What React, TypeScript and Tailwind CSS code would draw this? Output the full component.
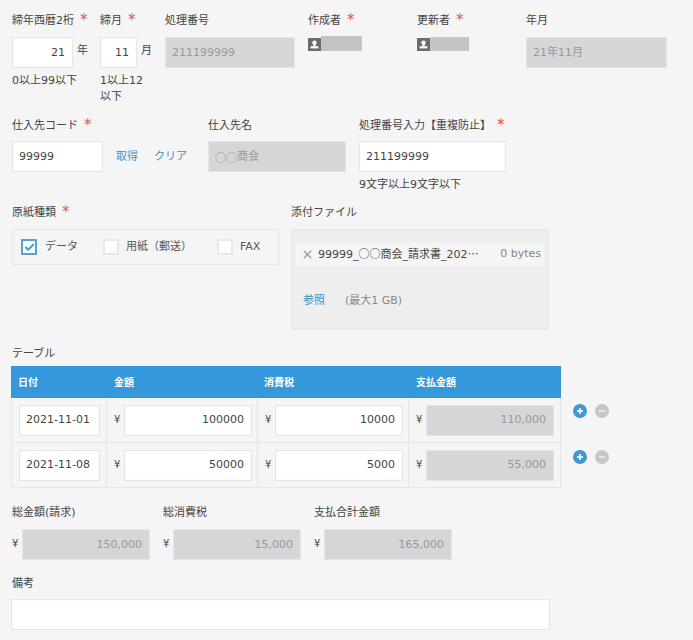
import type { ReactNode } from 'react'
import { Check, X } from 'lucide-react'
import clsx from 'clsx'

function Required() {
  return <span className="-mt-[2px] ml-[6px] text-[15px] leading-[14px] text-[#e2574c]">*</span>
}

function Label({ text, required }: { text: string; required?: boolean }) {
  return (
    <div className="flex h-[20px] items-center whitespace-nowrap pt-[2px] text-[#444]">
      {text}
      {required && <Required />}
    </div>
  )
}

function Input({ value, width, disabled, right }: { value?: ReactNode; width: string; disabled?: boolean; right?: boolean }) {
  return (
    <div
      className={clsx(
        'flex h-[31px] shrink-0 items-center border border-[#e3e7e8] pt-[1px]',
        width,
        disabled ? 'bg-[#d4d6d7] text-[#999]' : 'bg-white text-[#444] shadow-[inset_0_0_2px_#eee]',
        right ? 'justify-end pr-[7px]' : 'justify-start pl-[6px]',
      )}
    >
      {value}
    </div>
  )
}

function Money({ value, width, disabled }: { value: string; width: string; disabled?: boolean }) {
  return (
    <div className="flex items-center">
      <span className="-mt-[2px] w-[10px] text-[10px] text-[#444]">¥</span>
      <Input value={value} width={width} disabled={disabled} right />
    </div>
  )
}

function User({ barWidth, barClass }: { barWidth: string; barClass: string }) {
  return (
    <div className="flex items-end">
      <div className="flex h-[13px] w-[13px] items-center justify-center bg-[#6b6b6b]">
        <svg viewBox="0 0 13 13" className="h-[13px] w-[13px]">
          <circle cx="6.5" cy="4.8" r="2.2" fill="#fff" />
          <rect x="5.4" y="5" width="2.2" height="3.4" fill="#fff" />
          <rect x="2.6" y="8.2" width="7.8" height="2.2" fill="#fff" />
        </svg>
      </div>
      <div className={clsx('bg-[#c4c4c4]', barWidth, barClass)} />
    </div>
  )
}

function Checkbox({ checked, label, width }: { checked?: boolean; label: string; width: string }) {
  return (
    <div className={clsx('flex items-center', width)}>
      <div
        className={clsx(
          'flex h-[16px] w-[16px] items-center justify-center border-2 bg-white',
          checked ? 'border-[#5aa3d0]' : 'border-[#e8e8e8]',
        )}
      >
        {checked && <Check size={11} strokeWidth={4} className="text-[#3498db]" />}
      </div>
      <span className={clsx('text-[#555]', checked ? 'ml-[8px]' : 'ml-[7px]')}>{label}</span>
    </div>
  )
}

function RoundButton({ kind }: { kind: 'plus' | 'minus' }) {
  const plus = kind === 'plus'
  return (
    <svg viewBox="0 0 14 14" className="h-[14px] w-[14px]">
      <circle cx="7" cy="7" r="7" fill={plus ? '#3f97d8' : '#c6c6c6'} />
      <rect x="4" y="6.2" width="6" height="1.6" fill={plus ? '#fff' : '#eee'} />
      {plus && <rect x="6.2" y="4" width="1.6" height="6" fill="#fff" />}
    </svg>
  )
}

function Cell({ width, children }: { width: string; children: ReactNode }) {
  return <div className={clsx('flex h-full items-center border-r border-[#e3e7e8] pl-[7px]', width)}>{children}</div>
}

function Circles() {
  return <span className="font-['Noto_Sans_CJK_JP']">○○</span>
}

const rows = [
  { date: '2021-11-01', amount: '100000', tax: '10000', total: '110,000' },
  { date: '2021-11-08', amount: '50000', tax: '5000', total: '55,000' },
]

export default function App() {
  return (
    <div
      className="h-[640px] w-[693px] overflow-hidden bg-[#f5f5f5] pl-[12px] pt-[10px] text-[11px]"
      style={{ fontFamily: '"DejaVu Sans", "Noto Sans CJK JP", sans-serif' }}
    >
      <div className="flex h-[93px]">
        <div className="w-[88px]">
          <Label text="締年西暦2桁" required />
          <div className="mt-[7px] flex items-center">
            <Input value="21" width="w-[61px]" right />
            <span className="-mt-[2px] ml-[4px] text-[#444]">年</span>
          </div>
          <div className="mt-[5px] leading-[16px] text-[#444]">0以上99以下</div>
        </div>
        <div className="w-[65px]">
          <Label text="締月" required />
          <div className="mt-[7px] flex items-center">
            <Input value="11" width="w-[37px]" right />
            <span className="-mt-[2px] ml-[4px] text-[#444]">月</span>
          </div>
          <div className="mt-[5px] w-[48px] leading-[16px] text-[#444]">1以上12以下</div>
        </div>
        <div className="w-[143px]">
          <Label text="処理番号" />
          <div className="mt-[7px]">
            <Input value="211199999" width="w-[130px]" disabled />
          </div>
        </div>
        <div className="w-[109px]">
          <Label text="作成者" required />
          <div className="mt-[6px]">
            <User barWidth="w-[41px]" barClass="h-[15px]" />
          </div>
        </div>
        <div className="w-[109px]">
          <Label text="更新者" required />
          <div className="mt-[7px]">
            <User barWidth="w-[39px]" barClass="h-[14px]" />
          </div>
        </div>
        <div>
          <Label text="年月" />
          <div className="mt-[7px]">
            <Input value="21年11月" width="w-[141px]" disabled />
          </div>
        </div>
      </div>

      <div className="mt-[12px] flex h-[76px]">
        <div className="w-[196px]">
          <Label text="仕入先コード" required />
          <div className="mt-[6px] flex">
            <Input value="99999" width="w-[91px]" />
            <span className="ml-[13px] mt-[8px] text-[#3f8fc5]">取得</span>
            <span className="ml-[16px] mt-[8px] text-[#3f8fc5]">クリア</span>
          </div>
        </div>
        <div className="w-[151px]">
          <Label text="仕入先名" />
          <div className="mt-[6px]">
            <Input value={<><Circles />商会</>} width="w-[138px]" disabled />
          </div>
        </div>
        <div>
          <Label text="処理番号入力【重複防止】" required />
          <div className="mt-[6px]">
            <Input value="211199999" width="w-[147px]" />
          </div>
          <div className="mt-[5px] leading-[16px] text-[#444]">9文字以上9文字以下</div>
        </div>
      </div>

      <div className="mt-[11px] flex h-[127px]">
        <div className="w-[279px]">
          <Label text="原紙種類" required />
          <div className="mt-[7px] flex h-[36px] w-[267px] items-center border border-[#e3e7e8] pl-[8px]">
            <Checkbox checked label="データ" width="w-[82px]" />
            <Checkbox label="用紙（郵送）" width="w-[114px]" />
            <Checkbox label="FAX" width="w-[50px]" />
          </div>
        </div>
        <div>
          <Label text="添付ファイル" />
          <div className="mt-[7px] h-[101px] w-[258px] border border-[#e3e7e8] bg-[#eeeeee] px-[4px] pt-[13px]">
            <div className="flex h-[23px] items-center justify-between bg-[#f5f5f5] pl-[5px] pr-[3px]">
              <div className="flex items-center text-[#444]">
                <X size={13} strokeWidth={2.5} className="mr-[4px] text-[#999]" />
                <span>
                  99999_<Circles />商会_請求書_202<span className="font-['Noto_Sans_CJK_JP']">…</span>
                </span>
              </div>
              <span className="text-[#888]">0 bytes</span>
            </div>
            <div className="mt-[27px] flex items-center pl-[7px]">
              <span className="text-[#3f8fc5]">参照</span>
              <span className="ml-[20px] text-[#888]">(最大1 GB)</span>
            </div>
          </div>
        </div>
      </div>

      <div className="-ml-[1px] mt-[14px]">
        <div className="ml-[1px]">
          <Label text="テーブル" />
        </div>
        <div className="mt-[3px] flex items-start">
          <div className="w-[550px]">
            <div className="flex h-[32px] items-center bg-[#3498db] text-[10px] font-bold text-white">
              <div className="w-[102px] pl-[7px]">日付</div>
              <div className="w-[150px] pl-[1px]">金額</div>
              <div className="w-[152px] pl-[1px]">消費税</div>
              <div className="pl-[1px]">支払金額</div>
            </div>
            {rows.map(row => (
              <div key={row.date} className="flex h-[45px] items-center border-b border-l border-[#e3e7e8]">
                <Cell width="w-[95px]">
                  <Input value={row.date} width="w-[81px]" />
                </Cell>
                <Cell width="w-[151px]">
                  <Money value={row.amount} width="w-[128px]" />
                </Cell>
                <Cell width="w-[151px]">
                  <Money value={row.tax} width="w-[128px]" />
                </Cell>
                <Cell width="w-[152px]">
                  <Money value={row.total} width="w-[128px]" disabled />
                </Cell>
              </div>
            ))}
          </div>
          <div className="ml-[12px] mt-[38px] flex flex-col gap-[32px]">
            {rows.map(row => (
              <div key={row.date} className="flex gap-[8px]">
                <RoundButton kind="plus" />
                <RoundButton kind="minus" />
              </div>
            ))}
          </div>
        </div>
      </div>

      <div className="mt-[14px] flex">
        <div className="w-[151px]">
          <Label text="総金額(請求)" />
          <div className="mt-[7px]">
            <Money value="150,000" width="w-[128px]" disabled />
          </div>
        </div>
        <div className="w-[151px]">
          <Label text="総消費税" />
          <div className="mt-[7px]">
            <Money value="15,000" width="w-[128px]" disabled />
          </div>
        </div>
        <div>
          <Label text="支払合計金額" />
          <div className="mt-[7px]">
            <Money value="165,000" width="w-[128px]" disabled />
          </div>
        </div>
      </div>

      <div className="mt-[13px]">
        <Label text="備考" />
        <div className="-ml-[1px] mt-[6px]">
          <Input width="w-[539px]" />
        </div>
      </div>
    </div>
  )
}
